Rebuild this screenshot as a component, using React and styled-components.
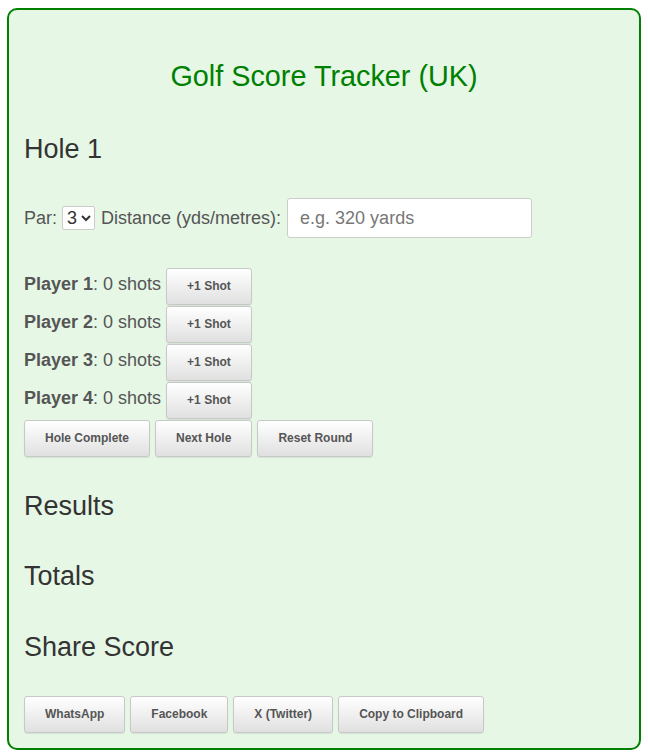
import styled, { createGlobalStyle } from 'styled-components';

const GlobalStyle = createGlobalStyle`
  body {
    margin: 0;
    background: #fff;
    font-family: "Liberation Sans", Arial, sans-serif;
    font-size: 18px;
    color: #555;
  }
`;

const Card = styled.div`
  max-width: 600px;
  margin: 8px auto;
  padding: 15px;
  border: 2px solid #008000;
  border-radius: 10px;
  background-color: #e6f7e6;
  display: flex;
  flex-direction: column;
  align-items: stretch;
`;

const Title = styled.h1`
  margin: 35px 0 0;
  font-size: 28.8px;
  font-weight: normal;
  color: #008000;
  text-align: center;
`;

const Heading = styled.h2`
  margin: ${p => p.$top}px 0 0;
  font-size: 27px;
  font-weight: normal;
  color: #333;
`;

const ParRow = styled.div`
  display: flex;
  align-items: center;
  height: 40px;
  margin-top: 33px;
`;

const ParSelect = styled.select`
  margin: 0 6px 0 5px;
  height: 24px;
  font-family: inherit;
  font-size: 18px;
  color: #333;
  background: #fff;
  border: 1px solid #ccc;
  border-radius: 2px;
  padding: 0;
`;

const DistanceInput = styled.input`
  box-sizing: border-box;
  width: 245px;
  height: 40px;
  margin-left: 6px;
  padding: 9px 12px;
  font-family: inherit;
  font-size: 18px;
  border: 1px solid #ccc;
  border-radius: 3px;
  background: #fff;
  color: #333;
  outline: none;

  &::placeholder {
    color: #777;
  }
`;

const Players = styled.div`
  margin-top: 30px;
  display: flex;
  flex-direction: column;
`;

const PlayerRow = styled.div`
  display: flex;
  align-items: baseline;
  height: 38px;
`;

const PlayerText = styled.span`
  margin-right: 5px;
`;

const ButtonRow = styled.div`
  display: flex;
  gap: 5px;
  margin-top: ${p => p.$top || 0}px;
`;

const Button = styled.button`
  height: 37px;
  padding: 10px 20px;
  font-family: inherit;
  font-size: 12px;
  font-weight: bold;
  line-height: 15px;
  color: #555;
  background: linear-gradient(to bottom, #ffffff, #e0e0e0);
  border: 1px solid #c8c8c8;
  border-radius: 3px;
  box-shadow: 0 1px 1px rgba(0, 0, 0, 0.08);
  cursor: pointer;
`;

const players = [1, 2, 3, 4];

export default function App() {
  return (
    <>
      <GlobalStyle />
      <Card>
        <Title>Golf Score Tracker (UK)</Title>
        <Heading $top={41}>Hole 1</Heading>
        <ParRow>
          Par:
          <ParSelect defaultValue="3">
            <option>3</option>
            <option>4</option>
            <option>5</option>
          </ParSelect>
          Distance (yds/metres):
          <DistanceInput placeholder="e.g. 320 yards" />
        </ParRow>
        <Players>
          {players.map(n => (
            <PlayerRow key={n}>
              <PlayerText>
                <b>Player {n}</b>: 0 shots
              </PlayerText>
              <Button>+1 Shot</Button>
            </PlayerRow>
          ))}
          <ButtonRow>
            <Button>Hole Complete</Button>
            <Button>Next Hole</Button>
            <Button>Reset Round</Button>
          </ButtonRow>
        </Players>
        <Heading $top={34}>Results</Heading>
        <Heading $top={39}>Totals</Heading>
        <Heading $top={40}>Share Score</Heading>
        <ButtonRow $top={33}>
          <Button>WhatsApp</Button>
          <Button>Facebook</Button>
          <Button>X (Twitter)</Button>
          <Button>Copy to Clipboard</Button>
        </ButtonRow>
      </Card>
    </>
  );
}
